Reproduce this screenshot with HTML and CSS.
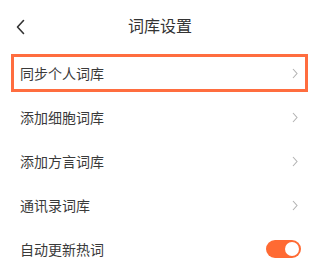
FILE: index.html
```html
<!DOCTYPE html>
<html lang="zh">
<head>
<meta charset="utf-8">
<link rel="stylesheet" href="styles.css">
</head>
<body>
<div class="page">
  <header class="header">
    <span class="back">
      <svg width="9" height="16" viewBox="0 0 9 16"><polyline points="7.5,1.5 1.5,8 7.5,14.5" fill="none" stroke="#333" stroke-width="1.6" stroke-linecap="round" stroke-linejoin="round"/></svg>
    </span>
    <h1 class="title">词库设置</h1>
  </header>
  <ul class="list">
    <li class="row highlight"><span class="label">同步个人词库</span><span class="chev"><svg width="6" height="11" viewBox="0 0 6 11"><polyline points="1,1 5,5.5 1,10" fill="none" stroke="#b3b3b3" stroke-width="1.1"/></svg></span></li>
    <li class="row"><span class="label">添加细胞词库</span><span class="chev"><svg width="6" height="11" viewBox="0 0 6 11"><polyline points="1,1 5,5.5 1,10" fill="none" stroke="#b3b3b3" stroke-width="1.1"/></svg></span></li>
    <li class="row"><span class="label">添加方言词库</span><span class="chev"><svg width="6" height="11" viewBox="0 0 6 11"><polyline points="1,1 5,5.5 1,10" fill="none" stroke="#b3b3b3" stroke-width="1.1"/></svg></span></li>
    <li class="row"><span class="label">通讯录词库</span><span class="chev"><svg width="6" height="11" viewBox="0 0 6 11"><polyline points="1,1 5,5.5 1,10" fill="none" stroke="#b3b3b3" stroke-width="1.1"/></svg></span></li>
    <li class="row"><span class="label">自动更新热词</span><span class="toggle"><span class="knob"></span></span></li>
  </ul>
</div>
</body>
</html>
```
FILE: styles.css
```css
* { box-sizing: border-box; }
html, body { margin: 0; padding: 0; background: #fff; }
body {
  font-family: "Noto Sans CJK SC", "Noto Sans", sans-serif;
  color: #333;
  width: 320px;
  height: 280px;
  overflow: hidden;
}
.header {
  position: relative;
  height: 51px;
  display: flex;
  align-items: center;
  justify-content: center;
}
.back {
  position: absolute;
  left: 16px;
  top: 19px;
  display: flex;
}
.title {
  margin: 0;
  font-size: 16px;
  font-weight: 400;
  color: #333;
  line-height: 1;
  padding-bottom: 2px;
}
.list {
  list-style: none;
  margin: 0;
  padding: 0;
}
.row {
  position: relative;
  height: 44px;
  display: flex;
  align-items: center;
  justify-content: space-between;
  padding: 0 22px 0 20px;
}
.label {
  font-size: 14px;
  color: #3a3a3a;
  line-height: 1;
}
.chev { display: flex; }
.highlight::after {
  content: "";
  position: absolute;
  left: 11px;
  right: 12px;
  top: 3px;
  bottom: 3px;
  border: 3px solid #ff6d3f;
}
.row:last-child { padding-right: 19px; }
.toggle {
  width: 35px;
  height: 18px;
  border-radius: 9px;
  background: #ff6a33;
  display: flex;
  align-items: center;
  justify-content: flex-end;
  padding-right: 2px;
}
.knob {
  width: 14px;
  height: 14px;
  border-radius: 50%;
  background: #fff;
}
```
